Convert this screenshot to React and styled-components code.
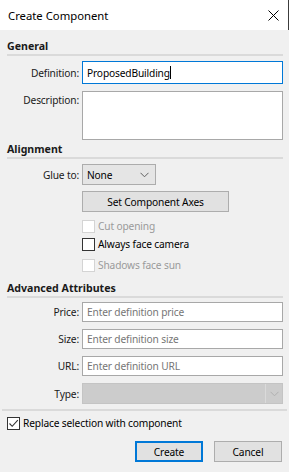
import React from "react";
import styled, { createGlobalStyle } from "styled-components";

const Global = createGlobalStyle`
  html, body { margin: 0; padding: 0; background: #f0f0f0; }
  body { font-family: "Noto Sans", "Segoe UI", sans-serif; font-size: 10.2px; letter-spacing: -0.15px; color: #000; }
  * { box-sizing: border-box; }
`;

const Window = styled.div`
  width: 289px;
  height: 472px;
  background: #f0f0f0;
  display: flex;
  flex-direction: column;
  overflow: hidden;
`;

const TitleBar = styled.div`
  height: 30px;
  flex: none;
  background: #ffffff;
  border-right: 1px solid #3c3c3c;
  display: flex;
  align-items: center;
  justify-content: space-between;
  padding: 0 9px 0 8px;
  font-size: 11.3px;
  letter-spacing: 0;
  color: #000;
`;

const Body = styled.div`
  padding: 0 6px 0 7px;
  display: flex;
  flex-direction: column;
`;

const Heading = styled.div`
  margin-top: ${(p) => p.$mt}px;
  height: 17px;
  line-height: 15px;
  font-size: 10.6px;
  letter-spacing: 0;
  font-weight: bold;
  color: #1a1a1a;
  border-bottom: 2px solid #dadada;
`;

const Row = styled.div`
  display: grid;
  grid-template-columns: 72px 1fr;
  column-gap: 3px;
  align-items: ${(p) => (p.$top ? "start" : "center")};
  margin-top: ${(p) => p.$mt}px;
`;

const Label = styled.div`
  text-align: right;
  color: #1a1a1a;
  padding-top: ${(p) => (p.$top ? 2 : 0)}px;
  white-space: nowrap;
`;

const TextBox = styled.div`
  height: ${(p) => p.$h}px;
  background: #fff;
  border: 1px solid ${(p) => (p.$focus ? "#0078d7" : "#a8a8a8")};
  padding: 0 4px;
  display: flex;
  align-items: ${(p) => (p.$multi ? "flex-start" : "center")};
  color: ${(p) => (p.$placeholder ? "#767676" : "#000")};
  white-space: nowrap;
`;

const Caret = styled.span`
  display: inline-block;
  width: 1px;
  height: 13px;
  background: #000;
`;

const Select = styled.div`
  width: ${(p) => (p.$full ? "auto" : "74px")};
  height: ${(p) => p.$h}px;
  background: ${(p) => (p.$disabled ? "#cccccc" : "#e5e5e5")};
  border: 1px solid ${(p) => (p.$disabled ? "#c4c4c4" : "#acacac")};
  display: flex;
  align-items: center;
  justify-content: space-between;
  padding-left: 4px;
  color: #000;
`;

const ArrowBox = styled.div`
  width: 17px;
  align-self: stretch;
  display: flex;
  align-items: center;
  justify-content: center;
  border-left: ${(p) => (p.$split ? "1px solid #dadada" : "none")};
  margin-right: ${(p) => (p.$split ? 0 : 2)}px;
`;

const Indented = styled.div`
  margin-left: 75px;
  display: flex;
  flex-direction: column;
`;

const Button = styled.div`
  width: ${(p) => p.$w}px;
  height: ${(p) => p.$h}px;
  margin-top: ${(p) => p.$mt || 0}px;
  background: #e1e1e1;
  border: 1px solid ${(p) => (p.$primary ? "#0078d7" : "#adadad")};
  box-shadow: ${(p) => (p.$primary ? "inset 0 0 0 1px #0078d7" : "none")};
  display: flex;
  align-items: center;
  justify-content: center;
  color: #000;
`;

const CheckRow = styled.div`
  display: flex;
  align-items: center;
  gap: 3px;
  height: 14px;
  margin-top: ${(p) => p.$mt}px;
  color: ${(p) => (p.$disabled ? "#9a9a9a" : "#000")};
`;

const Box = styled.div`
  width: 13px;
  height: 13px;
  flex: none;
  background: #fff;
  border: 1px solid ${(p) => (p.$disabled ? "#d4d4d4" : "#333")};
  display: flex;
  align-items: center;
  justify-content: center;
`;

const Separator = styled.div`
  margin: 5px -4px 0 -5px;
  border-top: 2px solid #dadada;
`;

const Footer = styled.div`
  display: flex;
  justify-content: flex-end;
  gap: 11px;
  margin-top: 11px;
  padding-right: 1px;
`;

const Chevron = ({ color = "#606060" }) => (
  <svg width="9" height="6" viewBox="0 0 9 6">
    <path d="M0.5 0.8 L4.5 4.8 L8.5 0.8" fill="none" stroke={color} strokeWidth="1" />
  </svg>
);

const Close = () => (
  <svg width="11" height="11" viewBox="0 0 11 11">
    <path d="M0.5 0.5 L10.5 10.5 M10.5 0.5 L0.5 10.5" stroke="#000" strokeWidth="1" />
  </svg>
);

const Check = () => (
  <svg width="11" height="11" viewBox="0 0 11 11">
    <path d="M1.5 5.5 L4.2 8.3 L9.8 2.2" fill="none" stroke="#333" strokeWidth="1.1" />
  </svg>
);

export default function App() {
  return (
    <Window>
      <Global />
      <TitleBar>
        <span>Create Component</span>
        <Close />
      </TitleBar>
      <Body>
        <Heading $mt={9}>General</Heading>
        <Row $mt={5}>
          <Label>Definition:</Label>
          <TextBox $h={23} $focus>
            ProposedBuilding<Caret />
          </TextBox>
        </Row>
        <Row $mt={7} $top>
          <Label $top>Description:</Label>
          <TextBox $h={49} $multi />
        </Row>

        <Heading $mt={2}>Alignment</Heading>
        <Row $mt={5}>
          <Label>Glue to:</Label>
          <Select $h={21}>
            None
            <ArrowBox>
              <Chevron />
            </ArrowBox>
          </Select>
        </Row>
        <Indented>
          <Button $w={147} $h={21} $mt={6}>Set Component Axes</Button>
          <CheckRow $mt={7} $disabled>
            <Box $disabled />
            Cut opening
          </CheckRow>
          <CheckRow $mt={4}>
            <Box />
            Always face camera
          </CheckRow>
          <CheckRow $mt={7} $disabled>
            <Box $disabled />
            Shadows face sun
          </CheckRow>
        </Indented>

        <Heading $mt={9}>Advanced Attributes</Heading>
        <Row $mt={4}>
          <Label>Price:</Label>
          <TextBox $h={20} $placeholder>Enter definition price</TextBox>
        </Row>
        <Row $mt={7}>
          <Label>Size:</Label>
          <TextBox $h={20} $placeholder>Enter definition size</TextBox>
        </Row>
        <Row $mt={7}>
          <Label>URL:</Label>
          <TextBox $h={20} $placeholder>Enter definition URL</TextBox>
        </Row>
        <Row $mt={7}>
          <Label>Type:</Label>
          <Select $full $disabled $h={21}>
            <span />
            <ArrowBox $split>
              <Chevron color="#b0b0b0" />
            </ArrowBox>
          </Select>
        </Row>

        <Separator />
        <CheckRow $mt={5}>
          <Box>
            <Check />
          </Box>
          Replace selection with component
        </CheckRow>
        <Footer>
          <Button $w={68} $h={21} $primary>Create</Button>
          <Button $w={68} $h={21}>Cancel</Button>
        </Footer>
      </Body>
    </Window>
  );
}
